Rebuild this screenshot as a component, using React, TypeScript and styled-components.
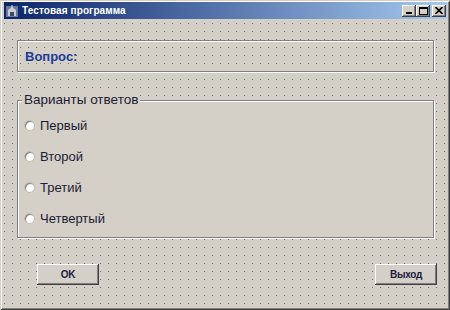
import styled, { createGlobalStyle } from 'styled-components'

const Global = createGlobalStyle`
  html, body {
    margin: 0;
    padding: 0;
    width: 450px;
    height: 310px;
    overflow: hidden;
    background: #d4d0c8;
  }
  body {
    font-family: "Liberation Sans", Arial, sans-serif;
  }
`

const Window = styled.div`
  width: 450px;
  height: 310px;
  box-sizing: border-box;
  display: flex;
  flex-direction: column;
  padding: 2px 3px 3px 4px;
  background: #d4d0c8;
  box-shadow: inset 1px 1px 0 #d4d0c8, inset -1px -1px 0 #404040,
    inset 2px 2px 0 #fff, inset -2px -2px 0 #808080;
`

const TitleBar = styled.div`
  height: 17px;
  margin-bottom: 1px;
  display: flex;
  align-items: center;
  gap: 3px;
  padding: 0 1px 0 1px;
  background: linear-gradient(90deg, #0a246a, #a6caf0);
`

const Title = styled.span`
  flex: 1;
  color: #fff;
  font: bold 10px "Liberation Sans", Arial, sans-serif;
  letter-spacing: 0.1px;
`

const CaptionButtons = styled.div`
  display: flex;
  align-items: center;
`

const CaptionButton = styled.div<{ $gap?: number }>`
  width: 14px;
  height: 12px;
  margin-left: ${p => p.$gap ?? 0}px;
  box-sizing: border-box;
  background: #d4d0c8;
  display: flex;
  align-items: center;
  justify-content: center;
  box-shadow: inset -1px -1px 0 #404040, inset 1px 1px 0 #fff,
    inset -2px -2px 0 #808080;
`

const Client = styled.div`
  flex: 1;
  display: flex;
  flex-direction: column;
  padding-top: 20px;
  background-image: linear-gradient(90deg, #d4d0c8 7px, transparent 7px),
    linear-gradient(#d4d0c8 7px, #6e6c66 7px);
  background-size: 8px 8px;
  background-position: 1px -4px;
`

const Bevel = styled.div`
  margin: 0 13px;
  height: 32px;
  box-sizing: border-box;
  border: 1px solid #808080;
  box-shadow: inset 1px 1px 0 #fff, 1px 1px 0 #fff;
  display: flex;
  align-items: center;
  padding-left: 7px;
`

const Question = styled.span`
  color: #1f3c98;
  font: bold 13px "Liberation Sans", Arial, sans-serif;
`

const GroupBox = styled.div`
  position: relative;
  margin: 28px 13px 0;
  height: 138px;
  box-sizing: border-box;
  border: 1px solid #808080;
  box-shadow: inset 1px 1px 0 #fff, 1px 1px 0 #fff;
  background: #d4d0c8;
  padding: 9px 0 0 7px;
  display: flex;
  flex-direction: column;
`

const GroupCaption = styled.span`
  position: absolute;
  top: -9px;
  left: 4px;
  padding: 0 2px;
  background: #d4d0c8;
  color: #1c1c34;
  font: 13.5px/16px "Liberation Sans", Arial, sans-serif;
`

const RadioRow = styled.label`
  height: 31px;
  display: flex;
  align-items: center;
  gap: 6px;
  color: #1c1c34;
  font: 13px "Liberation Sans", Arial, sans-serif;
`

const RadioDot = styled.span`
  width: 9px;
  height: 9px;
  border-radius: 50%;
  background: radial-gradient(circle at 60% 60%, #fff 45%, #e4e2dc 70%);
  box-shadow: inset 1px 1px 0 #8a8880, 0 0 0 0.5px #a8a59c;
`

const ButtonRow = styled.div`
  display: flex;
  justify-content: space-between;
  margin: 26px 10px 0 33px;
`

const Button = styled.button`
  width: 62px;
  height: 21px;
  padding: 0;
  border: none;
  background: #d4d0c8;
  color: #1c1c40;
  font: bold 10px "Liberation Sans", Arial, sans-serif;
  letter-spacing: -0.3px;
  box-shadow: inset -1px -1px 0 #404040, inset 1px 1px 0 #fff,
    inset -2px -2px 0 #808080;
`

function AppIcon() {
  return (
    <svg width="14" height="14" viewBox="0 0 14 14">
      <rect x="1" y="2" width="12" height="11" fill="#6c7a94" />
      <path d="M3 12 V6 L7 3 L11 6 V12 Z" fill="#c8ccd4" />
      <path d="M5 12 V8 H9 V12" fill="#3a4a6a" />
      <path d="M7 1 V4" stroke="#e8e8e8" strokeWidth="1" />
    </svg>
  )
}

const options = ['Первый', 'Второй', 'Третий', 'Четвертый']

export default function App() {
  return (
    <>
      <Global />
      <Window>
        <TitleBar>
          <AppIcon />
          <Title>Тестовая программа</Title>
          <CaptionButtons>
            <CaptionButton>
              <svg width="8" height="7" viewBox="0 0 8 7">
                <rect x="1" y="5" width="6" height="2" fill="#000" />
              </svg>
            </CaptionButton>
            <CaptionButton>
              <svg width="9" height="8" viewBox="0 0 9 8">
                <rect x="0.5" y="0.5" width="8" height="7" fill="none" stroke="#000" />
                <rect x="0" y="1" width="9" height="1" fill="#000" />
              </svg>
            </CaptionButton>
            <CaptionButton $gap={2}>
              <svg width="8" height="7" viewBox="0 0 8 7">
                <path d="M0.5 0 L7.5 7 M7.5 0 L0.5 7" stroke="#000" strokeWidth="1.6" />
              </svg>
            </CaptionButton>
          </CaptionButtons>
        </TitleBar>
        <Client>
          <Bevel>
            <Question>Вопрос:</Question>
          </Bevel>
          <GroupBox>
            <GroupCaption>Варианты ответов</GroupCaption>
            {options.map(o => (
              <RadioRow key={o}>
                <RadioDot />
                {o}
              </RadioRow>
            ))}
          </GroupBox>
          <ButtonRow>
            <Button>OK</Button>
            <Button>Выход</Button>
          </ButtonRow>
        </Client>
      </Window>
    </>
  )
}
